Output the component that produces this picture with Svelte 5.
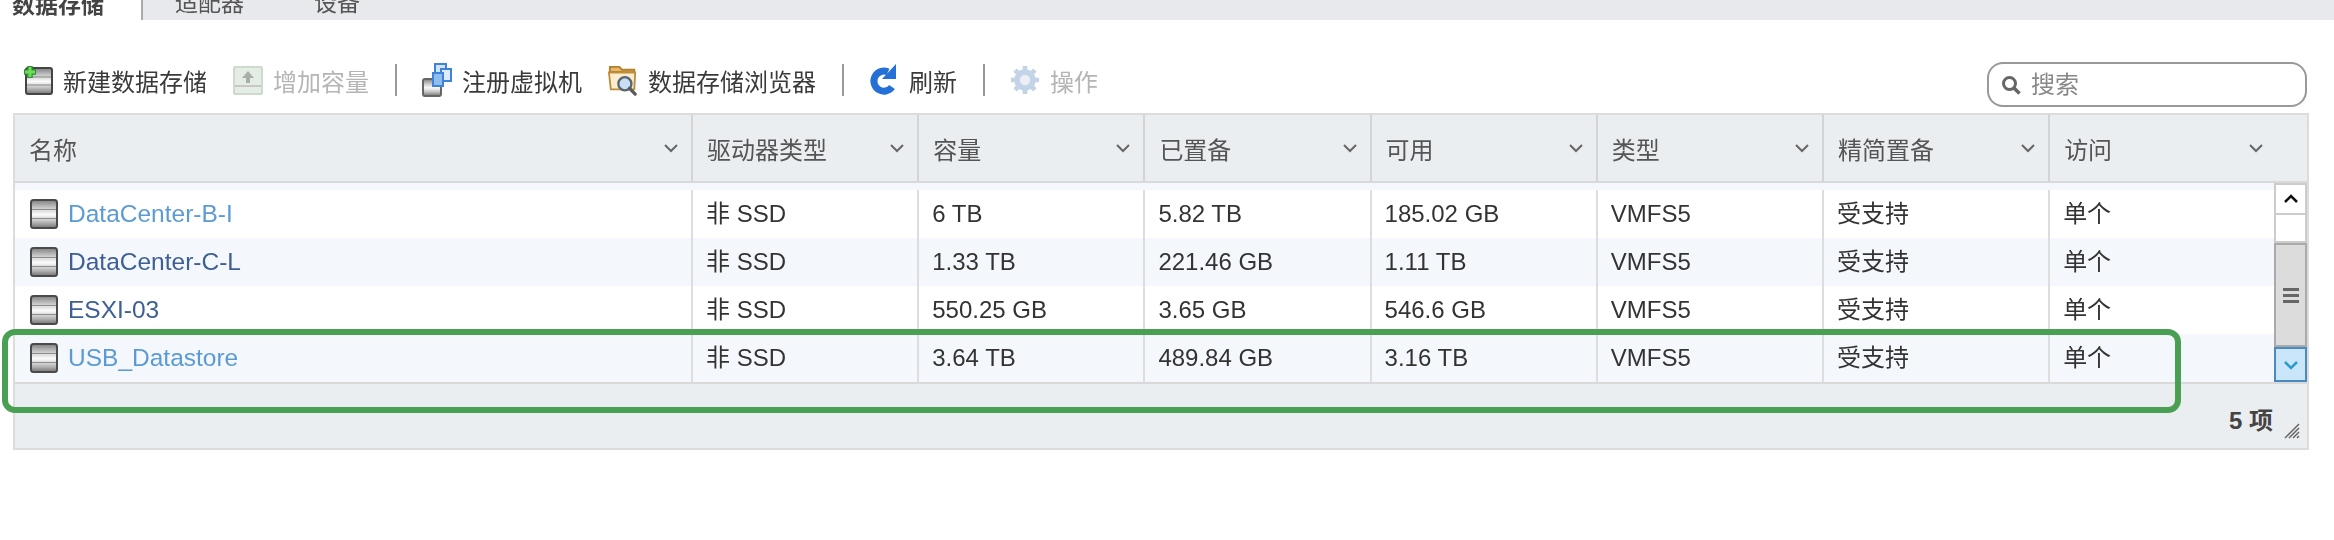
<script>
    const columns = ['名称', '驱动器类型', '容量', '已置备', '可用', '类型', '精简置备', '访问']

    const rows = [
        { name: 'DataCenter-B-I', link: 'light', drive: '非 SSD', capacity: '6 TB', provisioned: '5.82 TB', free: '185.02 GB' },
        { name: 'DataCenter-C-L', link: 'dark', drive: '非 SSD', capacity: '1.33 TB', provisioned: '221.46 GB', free: '1.11 TB' },
        { name: 'ESXI-03', link: 'dark', drive: '非 SSD', capacity: '550.25 GB', provisioned: '3.65 GB', free: '546.6 GB' },
        { name: 'USB_Datastore', link: 'light', drive: '非 SSD', capacity: '3.64 TB', provisioned: '489.84 GB', free: '3.16 TB' },
    ]
</script>

{#snippet dbIcon()}
    <svg class="db" viewBox="0 0 28 30" width="28" height="30">
        <rect x="1" y="1" width="26" height="28" rx="2.5" fill="url(#band)" stroke="#4a4a4a" stroke-width="2" />
        <path d="M2 10.5h24M2 19.5h24" stroke="#8c8c8c" stroke-width="1.2" />
    </svg>
{/snippet}

<div class="page">
    <svg class="defs" width="0" height="0">
        <defs>
            <linearGradient id="band" x1="0" y1="0" x2="0" y2="1">
                <stop offset="0" stop-color="#808080" />
                <stop offset="0.28" stop-color="#c9c9c9" />
                <stop offset="0.52" stop-color="#fbfbfb" />
                <stop offset="0.75" stop-color="#c4c4c4" />
                <stop offset="1" stop-color="#757575" />
            </linearGradient>
        </defs>
    </svg>

    <nav class="tabs">
        <div class="tab active">数据存储</div>
        <div class="tab">适配器</div>
        <div class="tab">设备</div>
    </nav>

    <div class="toolbar">
        <div class="actions">
            <button class="action">
                <svg viewBox="0 0 30 30" width="30" height="30">
                    <rect x="3" y="3" width="26" height="26" rx="2" fill="url(#band)" stroke="#444" stroke-width="2" />
                    <path d="M4 12h24M4 20h24" stroke="#888" stroke-width="1.2" />
                    <path d="M7 1v12M1 7h12" stroke="#2f8f2f" stroke-width="5.5" />
                    <path d="M7 2v10M2 7h10" stroke="#6fdc5e" stroke-width="3" />
                </svg>
                新建数据存储
            </button>
            <button class="action off">
                <svg viewBox="0 0 30 30" width="30" height="30">
                    <rect x="1" y="2" width="28" height="27" rx="1" fill="#e4ede4" stroke="#cfdacf" stroke-width="2" />
                    <path d="M2 21h26" stroke="#c8c8c8" stroke-width="2" />
                    <path d="M15 6l6 7h-4v5h-4v-5H9z" fill="#a9aea9" />
                </svg>
                增加容量
            </button>
            <span class="sep"></span>
            <button class="action">
                <svg viewBox="0 0 30 34" width="30" height="34">
                    <rect x="1" y="16" width="18" height="17" rx="2" fill="url(#band)" stroke="#666" stroke-width="2" />
                    <rect x="13" y="1" width="11" height="12" fill="#cfe3fb" stroke="#3f83d8" stroke-width="2" />
                    <rect x="19" y="6" width="10" height="12" fill="#dcebfd" stroke="#3f83d8" stroke-width="2" />
                    <rect x="11" y="10" width="10" height="13" fill="#8fbdf0" stroke="#3f83d8" stroke-width="2" />
                </svg>
                注册虚拟机
            </button>
            <button class="action">
                <svg viewBox="0 0 32 34" width="30" height="32">
                    <path d="M2 8V3h10l3 3h13v3z" fill="#e8b868" stroke="#b57f2c" stroke-width="2" />
                    <path d="M1 9h28l-1 18H3z" fill="#fbeed0" stroke="#c08d3c" stroke-width="2" />
                    <circle cx="18" cy="21" r="7" fill="#c9def2" stroke="#5a6570" stroke-width="2.5" />
                    <path d="M23 26l6 6" stroke="#5a5a5a" stroke-width="3.5" stroke-linecap="round" />
                </svg>
                数据存储浏览器
            </button>
            <span class="sep"></span>
            <button class="action">
                <svg viewBox="0 0 30 34" width="30" height="34">
                    <path d="M23 24a10 10 0 1 1-4-15" fill="none" stroke="#2470d6" stroke-width="7" />
                    <path d="M27 1v15H13z" fill="#2470d6" />
                </svg>
                刷新
            </button>
            <span class="sep"></span>
            <button class="action off">
                <svg viewBox="0 0 32 32" width="30" height="30">
                    <circle cx="16" cy="16" r="8.5" fill="#eceff3" stroke="#c3d3e8" stroke-width="6" />
                    <path d="M16 1v6M16 25v6M1 16h6M25 16h6M5.4 5.4l4.2 4.2M22.4 22.4l4.2 4.2M5.4 26.6l4.2-4.2M22.4 9.6l4.2-4.2" stroke="#c3d3e8" stroke-width="5" />
                </svg>
                操作
            </button>
        </div>
        <label class="search">
            <svg viewBox="0 0 20 20" width="20" height="20">
                <circle cx="8.5" cy="8.5" r="6" fill="none" stroke="#666" stroke-width="3" />
                <path d="M13 13l5.5 5.5" stroke="#666" stroke-width="3.5" />
            </svg>
            <input placeholder="搜索" />
        </label>
    </div>

    <div class="grid">
        <div class="head">
            {#each columns as col}
                <div class="th">
                    <span>{col}</span>
                    <svg class="chev" viewBox="0 0 16 10" width="16" height="10"><path d="M2 2l6 6 6-6" fill="none" stroke="#666" stroke-width="2" /></svg>
                </div>
            {/each}
        </div>
        <div class="body">
            <div class="rows">
                <div class="strip"></div>
                {#each rows as row}
                    <div class="row">
                        <div class="td name">
                            {@render dbIcon()}
                            <a href="#top" class={row.link}>{row.name}</a>
                        </div>
                        <div class="td">{row.drive}</div>
                        <div class="td">{row.capacity}</div>
                        <div class="td">{row.provisioned}</div>
                        <div class="td">{row.free}</div>
                        <div class="td">VMFS5</div>
                        <div class="td">受支持</div>
                        <div class="td">单个</div>
                    </div>
                {/each}
            </div>
            <div class="scrollbar">
                <div class="sb-btn up"><svg viewBox="0 0 16 10" width="16" height="10"><path d="M2 8l6-6 6 6" fill="none" stroke="#111" stroke-width="2.5" /></svg></div>
                <div class="sb-track"></div>
                <div class="sb-thumb"><i></i><i></i><i></i></div>
                <div class="sb-btn down"><svg viewBox="0 0 16 10" width="16" height="10"><path d="M2 2l6 6 6-6" fill="none" stroke="#2f9bc9" stroke-width="2.5" /></svg></div>
            </div>
        </div>
        <div class="foot">
            <span class="count">5 项</span>
            <svg class="grip" viewBox="0 0 16 16" width="16" height="16"><path d="M15 1L1 15M15 5L5 15M15 9L9 15M15 13l-2 2" stroke="#666" stroke-width="1.5" /></svg>
        </div>
    </div>

    <div class="highlight"></div>
</div>

<style>
    :global(body) {
        margin: 0;
        background: #fff;
    }

    .page {
        position: relative;
        width: 2334px;
        height: 540px;
        overflow: hidden;
        font-family: "Liberation Sans", "Noto Sans CJK SC", sans-serif;
        color: #333;
        filter: blur(0.5px);
    }

    .defs {
        position: absolute;
    }

    /* tabs, cut off by the top of the picture */
    .tabs {
        display: flex;
        height: 20px;
        background: #e8e9ed;
        align-items: flex-end;
        line-height: 20px;
        font-size: 23px;
        color: #555;
    }

    .tab {
        margin-bottom: 2px;
        padding: 0 40px 0 0;
        transform: translateY(-5px);
    }

    .tab:nth-child(2) {
        margin-left: 32px;
        padding-right: 70px;
    }

    .tab.active {
        align-self: stretch;
        margin: 0;
        padding: 0 0 0 12px;
        width: 129px;
        background: #fff;
        border-right: 2px solid #aaa;
        font-weight: bold;
        color: #444;
        transform: none;
        line-height: 10px;
    }

    .toolbar {
        display: flex;
        justify-content: space-between;
        align-items: flex-end;
        height: 93px;
        padding: 0 27px 6px 23px;
        box-sizing: border-box;
    }

    .actions {
        display: flex;
        align-items: center;
        height: 50px;
        margin-bottom: 2px;
    }

    .action {
        display: flex;
        align-items: center;
        gap: 10px;
        border: none;
        background: none;
        padding: 0;
        margin-right: 26px;
        font: inherit;
        font-size: 24px;
        color: #3a3a3a;
    }

    .action.off {
        color: #b5b5b5;
    }

    .sep {
        width: 2px;
        height: 32px;
        background: #999;
        margin-right: 25px;
    }

    .search {
        display: flex;
        align-items: center;
        gap: 8px;
        box-sizing: border-box;
        width: 320px;
        height: 45px;
        padding-left: 12px;
        border: 2px solid #999;
        border-radius: 16px;
    }

    .search input {
        border: none;
        outline: none;
        flex: 1;
        min-width: 0;
        font: inherit;
        font-size: 24px;
        background: transparent;
    }

    .search input::placeholder {
        color: #888;
    }

    .grid {
        box-sizing: border-box;
        width: 2296px;
        margin-left: 13px;
        border: 2px solid #dcdcdc;
        background: #fff;
    }

    .head {
        display: grid;
        grid-template-columns: 678px repeat(6, 226.2px) 1fr;
        height: 66px;
        background: #ebeef1;
        border-bottom: 2px solid #d9d9d9;
    }

    .th {
        display: flex;
        align-items: center;
        justify-content: space-between;
        padding: 0 12px 0 14px;
        border-right: 2px solid #d4d4d4;
        font-size: 24px;
        color: #555;
    }

    .th:last-child {
        border-right: none;
        padding-right: 43px;
    }

    .body {
        display: flex;
        height: 199px;
    }

    .rows {
        flex: 1;
        min-width: 0;
    }

    .strip {
        height: 7px;
        background: #f4f7fb;
    }

    .row {
        display: grid;
        grid-template-columns: 678px repeat(6, 226.2px) 1fr;
        height: 48px;
    }

    .row:nth-child(odd) {
        background: #f4f7fb;
    }

    .td {
        display: flex;
        align-items: center;
        padding-left: 13px;
        border-right: 2px solid #ddd;
        font-size: 24px;
        line-height: 1;
        color: #333;
    }

    .td:last-child {
        border-right: none;
    }

    .td.name {
        gap: 10px;
        padding-left: 15px;
    }

    .td a {
        font-size: 24.5px;
        text-decoration: none;
    }

    .light {
        color: #5b9bd5;
    }

    .dark {
        color: #3d5f95;
    }

    .scrollbar {
        display: flex;
        flex-direction: column;
        width: 33px;
    }

    .sb-btn {
        display: flex;
        align-items: center;
        justify-content: center;
        box-sizing: border-box;
        height: 32px;
        border: 2px solid #ccc;
        background: #fff;
    }

    .sb-btn.down {
        height: 35px;
        border-color: #4a8ac4;
        background: #c9e6fb;
    }

    .sb-track {
        height: 28px;
        border: 2px solid #ccc;
        border-top: none;
        box-sizing: border-box;
    }

    .sb-thumb {
        flex: 1;
        display: flex;
        flex-direction: column;
        align-items: center;
        justify-content: center;
        gap: 3px;
        background: #dcdcdc;
        border: 2px solid #aaa;
        box-sizing: border-box;
    }

    .sb-thumb i {
        width: 16px;
        height: 3px;
        background: #666;
    }

    .foot {
        position: relative;
        display: flex;
        align-items: flex-end;
        justify-content: flex-end;
        height: 66px;
        padding: 0 34px 12px 0;
        box-sizing: border-box;
        background: #ebeef1;
        border-top: 2px solid #d9d9d9;
    }

    .count {
        font-size: 24px;
        font-weight: bold;
        color: #444;
    }

    .grip {
        position: absolute;
        right: 7px;
        bottom: 9px;
    }

    /* annotation drawn over the screenshot */
    .highlight {
        position: absolute;
        left: 2px;
        top: 329px;
        width: 2179px;
        height: 84px;
        box-sizing: border-box;
        border: 6px solid #4aa052;
        border-radius: 13px;
    }
</style>
